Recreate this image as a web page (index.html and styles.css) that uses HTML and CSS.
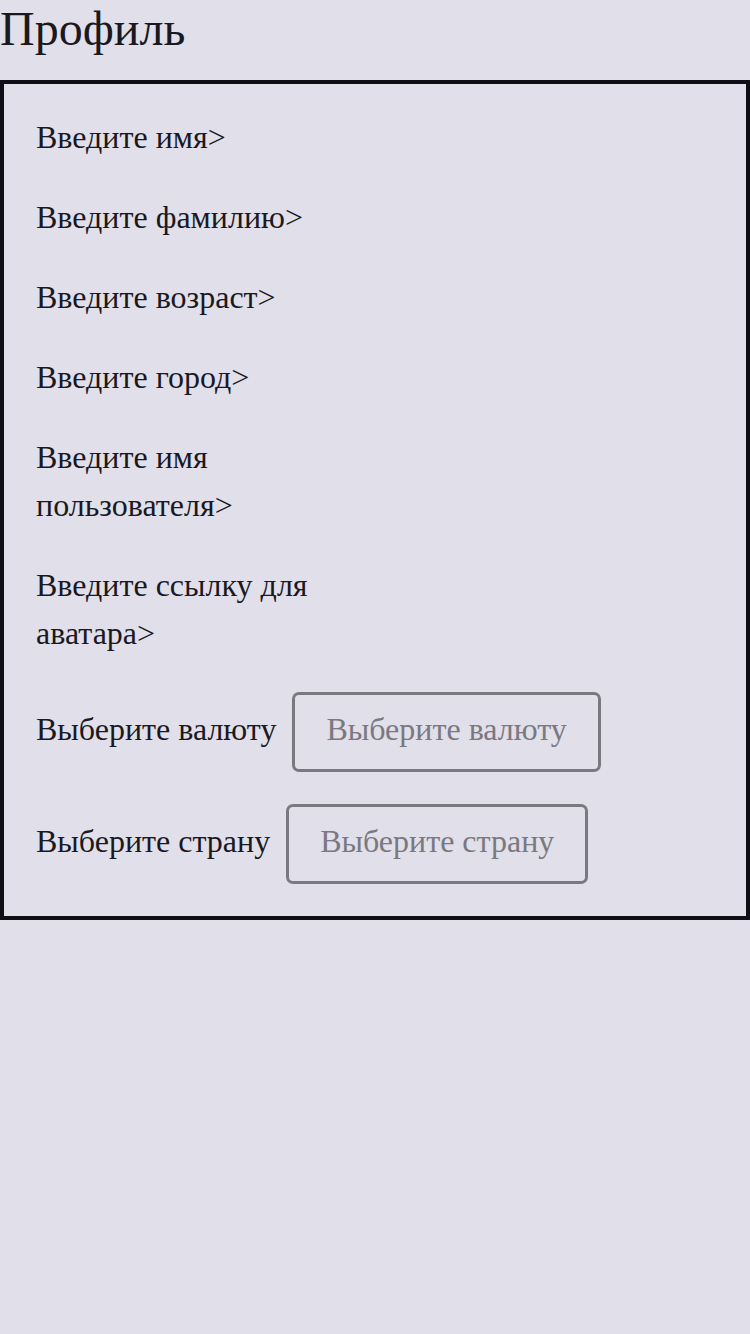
FILE: index.html
```html
<!DOCTYPE html>
<html lang="ru">
<head>
<meta charset="utf-8">
<title>Профиль</title>
<link rel="stylesheet" href="styles.css">
</head>
<body>
<h1 class="title">Профиль</h1>
<div class="card">
  <div class="field">Введите имя&gt;</div>
  <div class="field">Введите фамилию&gt;</div>
  <div class="field">Введите возраст&gt;</div>
  <div class="field">Введите город&gt;</div>
  <div class="field">Введите имя пользователя&gt;</div>
  <div class="field">Введите ссылку для аватара&gt;</div>
  <div class="select-row">
    <span class="select-label">Выберите валюту</span>
    <button class="select-btn">Выберите валюту</button>
  </div>
  <div class="select-row">
    <span class="select-label">Выберите страну</span>
    <button class="select-btn">Выберите страну</button>
  </div>
</div>
</body>
</html>
```
FILE: styles.css
```css
html, body {
  margin: 0;
  padding: 0;
  background: #e1dfe9;
  color: #1a191f;
  font-family: "Liberation Serif", "Times New Roman", serif;
}
.title {
  margin: 0;
  font-size: 48px;
  font-weight: normal;
  line-height: 58px;
  height: 80px;
}
.card {
  border: 4px solid #0f0e14;
  padding: 32px;
  display: flex;
  flex-direction: column;
  gap: 32px;
}
.field {
  font-size: 32px;
  line-height: 48px;
  max-width: 300px;
  margin-top: -3px;
  padding-bottom: 3px;
}
.select-row {
  display: flex;
  align-items: center;
  gap: 16px;
  font-size: 32px;
  line-height: 48px;
}
.select-label {
  padding-bottom: 6px;
}
.select-btn {
  font-family: inherit;
  font-size: 32px;
  line-height: 48px;
  color: #7a7880;
  background: transparent;
  border: 3px solid #7a7880;
  border-radius: 7px;
  padding: 10px 31px 16px;
  margin: 0;
}
```
